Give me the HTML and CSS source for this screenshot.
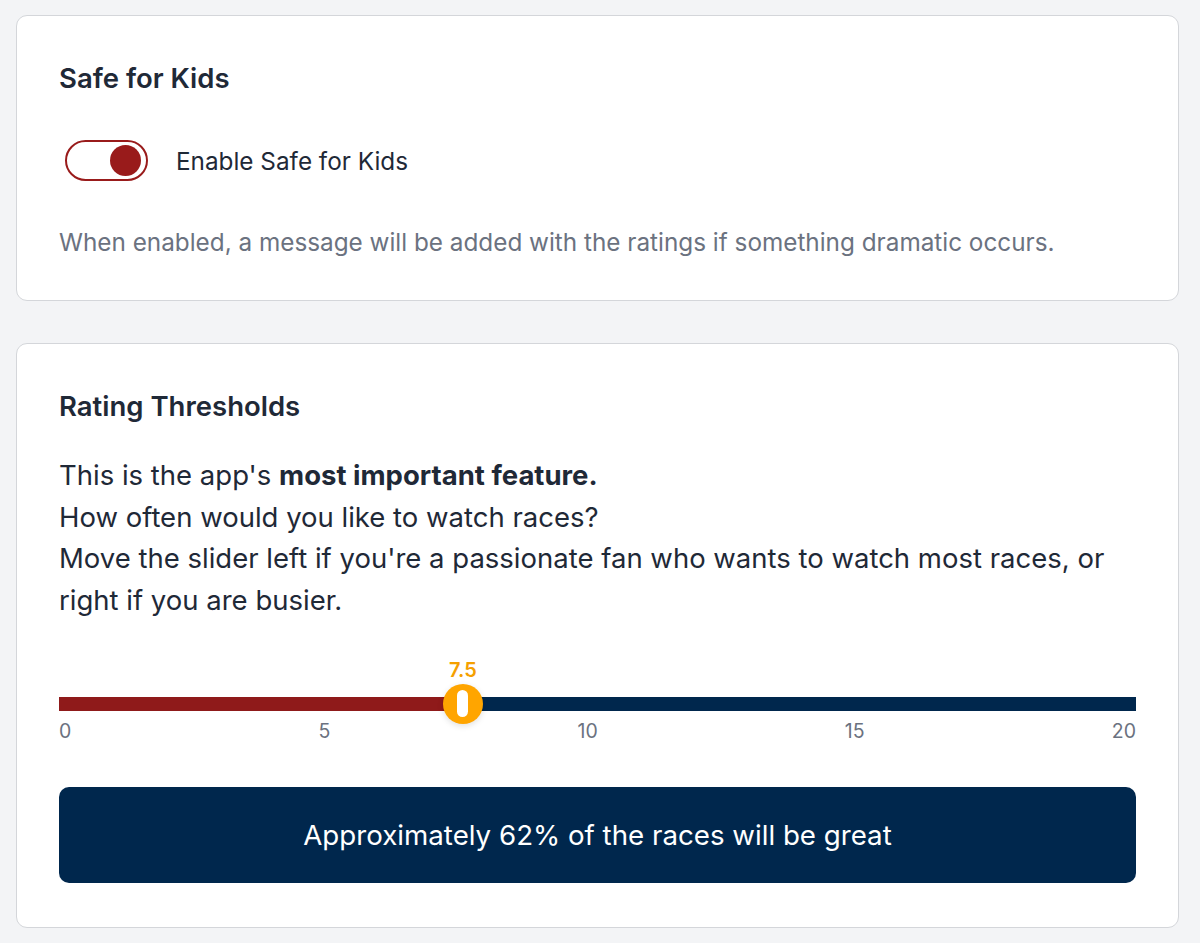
FILE: index.html
```html
<!DOCTYPE html>
<html lang="en">
<head>
<meta charset="utf-8">
<title>Settings</title>
<link rel="stylesheet" href="styles.css">
</head>
<body>
<main class="page">
  <section class="card card-first">
    <h2 class="card-title">Safe for Kids</h2>
    <label class="toggle-row">
      <span class="toggle"><span class="knob"></span></span>
      <span class="toggle-label">Enable Safe for Kids</span>
    </label>
    <p class="hint">When enabled, a message will be added with the ratings if something dramatic occurs.</p>
  </section>

  <section class="card card-second">
    <h2 class="card-title">Rating Thresholds</h2>
    <p class="intro">This is the app's <strong>most important feature.</strong><br>How often would you like to watch races?<br>Move the slider left if you're a passionate fan who wants to watch most races, or right if you are busier.</p>
    <div class="slider">
      <div class="track">
        <div class="fill" style="width:37.5%"></div>
        <div class="thumb" style="left:37.5%">
          <span class="value">7.5</span>
          <span class="grip"></span>
        </div>
      </div>
      <div class="ticks">
        <span>0</span><span>5</span><span>10</span><span>15</span><span>20</span>
      </div>
    </div>
    <div class="result">Approximately 62% of the races will be great</div>
  </section>
</main>
</body>
</html>
```

FILE: styles.css
```css
* { box-sizing: border-box; }
html, body { margin: 0; padding: 0; }
body {
  background: #f3f4f6;
  font-family: "Inter", "Noto Sans", sans-serif;
  color: #1f2937;
}
.page {
  padding: 15px 21px 16px 16px;
  display: flex;
  flex-direction: column;
  gap: 42px;
}
.card {
  background: #fff;
  border: 1.5px solid #d4d6da;
  border-radius: 11px;
  padding: 44px 42px 42px 42px;
}
.card-second {
  padding-bottom: 44px;
}
.card-title {
  margin: 0;
  font-size: 27.5px;
  line-height: 36px;
  font-weight: 600;
  color: #1f2937;
}
.toggle-row {
  display: flex;
  align-items: center;
  gap: 28px;
  margin-top: 44px;
  padding-left: 6px;
}
.toggle {
  width: 83px;
  height: 41px;
  border: 2px solid #991b1b;
  border-radius: 21px;
  display: flex;
  align-items: center;
  justify-content: flex-end;
  padding-right: 5px;
  background: #fff;
}
.knob {
  width: 31px;
  height: 31px;
  border-radius: 50%;
  background: #991b1b;
}
.toggle-label {
  font-size: 24.3px;
  color: #1f2937;
}
.hint {
  margin: 45px 0 0;
  font-size: 24.3px;
  line-height: 32px;
  color: #6b7280;
}
.intro {
  margin: 31px 0 0;
  font-size: 27.5px;
  line-height: 41.7px;
  color: #1f2937;
}
.intro strong { font-weight: 700; }
.slider {
  margin-top: 75px;
}
.track {
  position: relative;
  height: 14px;
  background: #00274d;
}
.fill {
  height: 100%;
  background: #8f1a1a;
}
.thumb {
  position: absolute;
  top: 50%;
  width: 40px;
  height: 40px;
  margin: -20px 0 0 -20px;
  border-radius: 50%;
  background: #ffa500;
  display: flex;
  align-items: center;
  justify-content: center;
  box-shadow: 0 2px 6px rgba(0,0,0,0.12);
}
.grip {
  width: 11px;
  height: 27px;
  border-radius: 6px;
  background: #fff;
}
.value {
  position: absolute;
  bottom: 42px;
  left: 50%;
  transform: translateX(-50%);
  font-size: 20px;
  font-weight: 600;
  color: #f5a000;
}
.ticks {
  display: flex;
  justify-content: space-between;
  margin-top: 8px;
  font-size: 19.5px;
  line-height: 24px;
  color: #6b7280;
}
.result {
  margin-top: 44px;
  height: 96px;
  border-radius: 10px;
  background: #00274d;
  color: #fff;
  font-size: 27.7px;
  display: flex;
  align-items: center;
  justify-content: center;
}
```
